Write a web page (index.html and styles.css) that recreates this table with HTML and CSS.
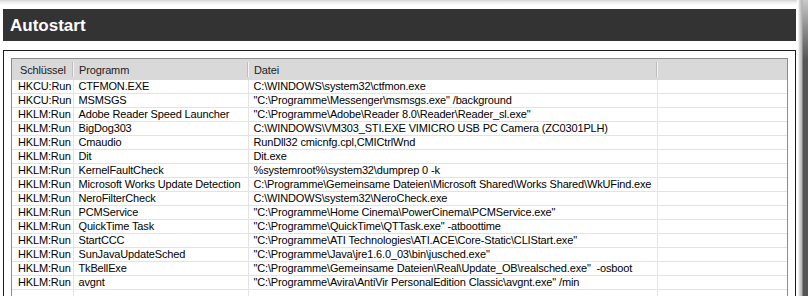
FILE: index.html
```html
<!DOCTYPE html>
<html>
<head>
<meta charset="utf-8">
<link rel="stylesheet" href="styles.css">
</head>
<body>
<div class="screen">
  <div class="page">
    <div class="topstrip"></div>
    <div class="titlebar">Autostart</div>
    <div class="panel">
      <div class="list">
        <table class="grid">
          <colgroup>
            <col class="c1"><col class="c2"><col class="c3"><col class="c4">
          </colgroup>
          <thead>
            <tr><th>Schlüssel</th><th>Programm</th><th>Datei</th><th></th></tr>
          </thead>
          <tbody>
            <tr><td>HKCU:Run</td><td>CTFMON.EXE</td><td>C:\WINDOWS\system32\ctfmon.exe</td><td></td></tr>
            <tr><td>HKCU:Run</td><td>MSMSGS</td><td>"C:\Programme\Messenger\msmsgs.exe" /background</td><td></td></tr>
            <tr><td>HKLM:Run</td><td>Adobe Reader Speed Launcher</td><td>"C:\Programme\Adobe\Reader 8.0\Reader\Reader_sl.exe"</td><td></td></tr>
            <tr><td>HKLM:Run</td><td>BigDog303</td><td>C:\WINDOWS\VM303_STI.EXE VIMICRO USB PC Camera (ZC0301PLH)</td><td></td></tr>
            <tr><td>HKLM:Run</td><td>Cmaudio</td><td>RunDll32 cmicnfg.cpl,CMICtrlWnd</td><td></td></tr>
            <tr><td>HKLM:Run</td><td>Dit</td><td>Dit.exe</td><td></td></tr>
            <tr><td>HKLM:Run</td><td>KernelFaultCheck</td><td>%systemroot%\system32\dumprep 0 -k</td><td></td></tr>
            <tr><td>HKLM:Run</td><td>Microsoft Works Update Detection</td><td>C:\Programme\Gemeinsame Dateien\Microsoft Shared\Works Shared\WkUFind.exe</td><td></td></tr>
            <tr><td>HKLM:Run</td><td>NeroFilterCheck</td><td>C:\WINDOWS\system32\NeroCheck.exe</td><td></td></tr>
            <tr><td>HKLM:Run</td><td>PCMService</td><td>"C:\Programme\Home Cinema\PowerCinema\PCMService.exe"</td><td></td></tr>
            <tr><td>HKLM:Run</td><td>QuickTime Task</td><td>"C:\Programme\QuickTime\QTTask.exe" -atboottime</td><td></td></tr>
            <tr><td>HKLM:Run</td><td>StartCCC</td><td>"C:\Programme\ATI Technologies\ATI.ACE\Core-Static\CLIStart.exe"</td><td></td></tr>
            <tr><td>HKLM:Run</td><td>SunJavaUpdateSched</td><td>"C:\Programme\Java\jre1.6.0_03\bin\jusched.exe"</td><td></td></tr>
            <tr><td>HKLM:Run</td><td>TkBellExe</td><td>"C:\Programme\Gemeinsame Dateien\Real\Update_OB\realsched.exe"&nbsp; -osboot</td><td></td></tr>
            <tr><td>HKLM:Run</td><td>avgnt</td><td>"C:\Programme\Avira\AntiVir PersonalEdition Classic\avgnt.exe" /min</td><td></td></tr>
            <tr><td></td><td></td><td></td><td></td></tr>
          </tbody>
        </table>
      </div>
    </div>
  </div>
  <div class="edge"></div>
</div>
</body>
</html>
```
FILE: styles.css
```css
html, body {
  margin: 0;
  padding: 0;
  background: #fff;
  height: 296px;
  overflow: hidden;
}
.screen {
  display: flex;
  width: 808px;
  height: 296px;
  overflow: hidden;
}
.page {
  width: 797px;
  height: 296px;
  display: flex;
  flex-direction: column;
  overflow: hidden;
}
.page > * {
  flex: none;
}
.topstrip {
  height: 9px;
  background: linear-gradient(to bottom, #d4d4d4 0, #ececec 2px, #fff 5px);
}
.titlebar {
  margin-left: 3px;
  width: 793px;
  height: 32px;
  box-sizing: border-box;
  background: #333333;
  color: #fff;
  font-family: "Liberation Sans", Arial, sans-serif;
  font-weight: bold;
  font-size: 17px;
  line-height: 33px;
  padding-left: 7px;
}
.panel {
  margin-top: 9px;
  margin-left: 3px;
  width: 793px;
  box-sizing: border-box;
  border: 1px solid #1e1e1e;
  border-bottom: none;
  padding: 7px 7px 0 7px;
}
.list {
  border: 1px solid #8c8c8c;
  border-bottom: none;
  height: 260px;
  overflow: hidden;
}
.grid {
  border-collapse: collapse;
  table-layout: fixed;
  width: 775px;
  font-family: "Liberation Sans", Arial, sans-serif;
  font-size: 11px;
  letter-spacing: -0.15px;
  color: #000;
}
.c1 { width: 61px; }
.c2 { width: 175px; }
.c3 { width: 409px; }
.c4 { width: 130px; }
.grid th {
  height: 21px;
  padding: 0 0 0 8px;
  background: #d9d9d9;
  font-weight: normal;
  text-align: left;
  position: relative;
  color: #222;
}
.grid th + th {
  padding-left: 6px;
}
.grid th + th::before {
  content: "";
  position: absolute;
  left: -1px;
  top: 3px;
  bottom: 3px;
  width: 1px;
  background: #bdbdbd;
  box-shadow: 1px 0 0 #f4f4f4;
}
.grid td {
  height: 13px;
  padding: 0 0 0 5px;
  border-bottom: 1px solid #e3e3e3;
  border-left: 1px solid #e3e3e3;
  white-space: nowrap;
  overflow: hidden;
  line-height: 13px;
}
.grid td:first-child {
  border-left: none;
  padding-left: 6px;
}
.edge {
  flex: 1;
  background:
    linear-gradient(to right, #fff 0, #fff 1px, #e0e0e0 2px, #b0b0b0 5px, rgba(85,85,85,0) 6px),
    linear-gradient(to bottom, #c8c8c8 0, #8a8a8a 30px, #555 60px, #555 100%);
}
```
